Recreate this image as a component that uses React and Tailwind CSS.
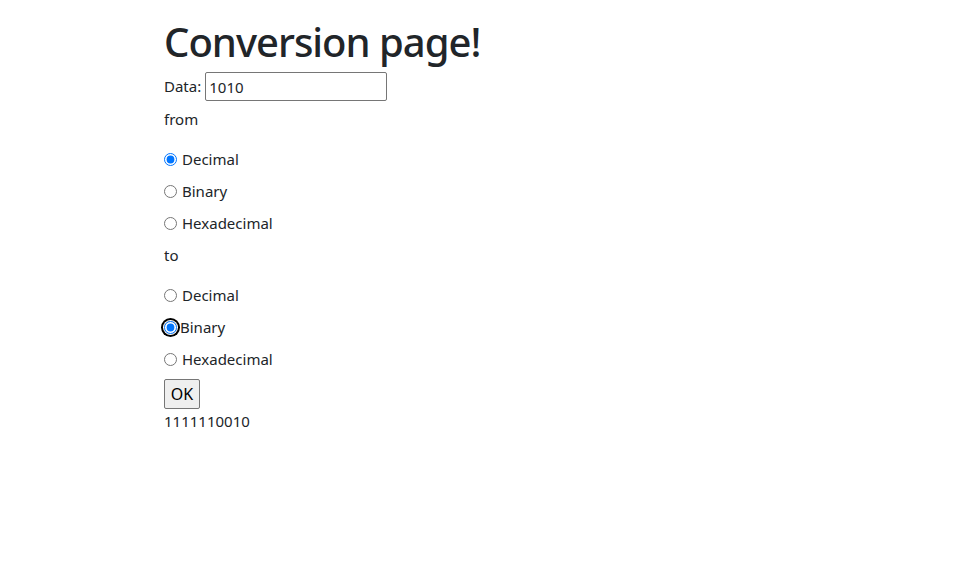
import React from "react";

const font = { fontFamily: '"Noto Sans", "Open Sans", sans-serif' };

function Radio({ label, checked, focused, name }) {
  const input = (
    <input
      type="radio"
      name={name}
      defaultChecked={checked}
      className="block w-[13px] h-[13px] m-0 accent-[#0075ff]"
    />
  );
  return (
    <label className="flex items-center h-[24px] text-[15px] text-[#212529]">
      {focused ? (
        <span className="inline-flex rounded-full shadow-[0_0_0_1px_#ffffff,0_0_0_3px_#000000] mr-[3px]">
          {input}
        </span>
      ) : (
        <span className="inline-flex mr-[5px]">{input}</span>
      )}
      <span>{label}</span>
    </label>
  );
}

export default function App() {
  return (
    <div className="min-h-[573px] bg-white" style={font}>
      <div className="pl-[164px] flex flex-col text-[#212529]">
        <h1 className="mt-[18px] h-[48px] leading-[48px] text-[40px] font-medium tracking-[-1px]">
          Conversion page!
        </h1>
        <div className="mt-[6px] flex items-center h-[29px] text-[15px]">
          <span className="mr-[4px]">Data:</span>
          <input
            type="text"
            defaultValue="1010"
            className="w-[182px] h-[29px] border border-[#767676] rounded-[2px] px-[3px] text-[15px] text-[#212529] outline-none"
            style={font}
          />
        </div>
        <div className="mt-[6px] h-[24px] leading-[24px] text-[15px]">from</div>
        <div className="mt-[16px] flex flex-col gap-[8px]">
          <Radio name="from" label="Decimal" checked />
          <Radio name="from" label="Binary" />
          <Radio name="from" label="Hexadecimal" />
        </div>
        <div className="mt-[8px] h-[24px] leading-[24px] text-[15px]">to</div>
        <div className="mt-[16px] flex flex-col gap-[8px]">
          <Radio name="to" label="Decimal" />
          <Radio name="to" label="Binary" checked focused />
          <Radio name="to" label="Hexadecimal" />
        </div>
        <div className="mt-[8px]">
          <button className="w-[36px] h-[30px] border border-[#767676] rounded-[2px] bg-[#efefef] text-[16px] text-black">
            OK
          </button>
        </div>
        <div className="h-[24px] leading-[24px] text-[15px]">1111110010</div>
      </div>
    </div>
  );
}
